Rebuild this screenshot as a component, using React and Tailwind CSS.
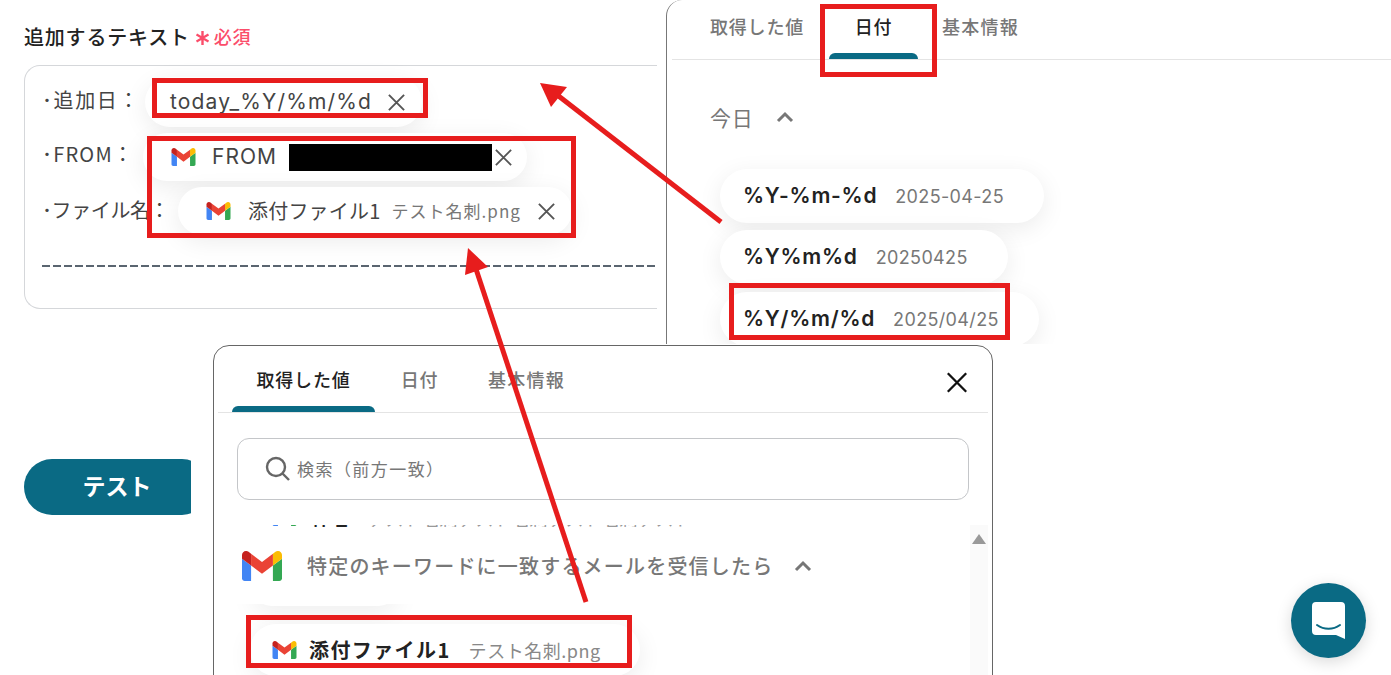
function GmailLogo({ className }) {
  return (
    <svg className={className} viewBox="52 42 88 66" aria-hidden="true">
      <path fill="#4285f4" d="M58 108h14V74L52 59v43c0 3.32 2.69 6 6 6" />
      <path fill="#34a853" d="M120 108h14c3.32 0 6-2.69 6-6V59l-20 15" />
      <path fill="#fbbc04" d="M120 48v26l20-15v-8c0-7.42-8.47-11.65-14.4-7.2" />
      <path fill="#ea4335" d="M72 74V48l24 18 24-18v26L96 92" />
      <path fill="#c5221f" d="M52 51v8l20 15V48l-5.6-4.2c-5.94-4.45-14.4-.22-14.4 7.2" />
    </svg>
  )
}

function CloseIcon({ className }) {
  return (
    <svg className={className} viewBox="0 0 20 20" fill="none" stroke="currentColor" strokeWidth="2" aria-hidden="true">
      <path d="M2 2l16 16M18 2L2 18" />
    </svg>
  )
}

function ChevronUp({ className }) {
  return (
    <svg className={className} viewBox="0 0 18 12" fill="none" stroke="currentColor" strokeWidth="3" aria-hidden="true">
      <path d="M2 10l7-7 7 7" />
    </svg>
  )
}

function DateChip({ format, value, width }) {
  return (
    <div className={`flex h-[54px] shrink-0 items-center rounded-full bg-white pl-[23px] shadow-[0_6px_24px_rgba(0,0,0,0.08)] ${width}`}>
      <span className="whitespace-nowrap font-['Inter',sans-serif] text-[21px] font-semibold tracking-[0.035em] text-[#222]">{format}</span>
      <span className="ml-[18px] whitespace-nowrap font-['Inter',sans-serif] text-[18px] tracking-[0.02em] text-[#777]">{value}</span>
    </div>
  )
}

function Tabs({ active, firstGap, className }) {
  const tabs = ['取得した値', '日付', '基本情報']
  return (
    <div className={`flex border-b border-[#e4e4e4] text-[18px] font-medium ${className}`}>
      {tabs.map((tab, i) => (
        <div
          key={tab}
          className={`relative flex items-center justify-center whitespace-nowrap ${tab === active ? 'text-[#222]' : 'text-[#777]'} ${firstGap[i]}`}
        >
          {tab}
          {tab === active && <span className="absolute bottom-0 left-0 right-0 h-[6px] rounded-t-[6px] bg-[#0a6a84]" />}
        </div>
      ))}
    </div>
  )
}

const redBoxes = [
  'left-[152px] top-[78px] h-[40px] w-[276px]',
  'left-[147px] top-[136px] h-[102px] w-[429px]',
  'left-[820px] top-[4px] h-[73px] w-[117px]',
  'left-[729px] top-[283px] h-[57px] w-[281px]',
  'left-[246px] top-[615px] h-[53px] w-[386px]',
]

export default function App() {
  return (
    <div className="relative flex h-[675px] w-[1391px] overflow-hidden bg-white font-['Noto_Sans_CJK_JP','Noto_Sans',sans-serif] tracking-[0.05em] text-[#333]">
      {/* left form */}
      <div className="w-[657px] shrink-0 pl-6">
        <div className="flex h-[65px] items-center pt-[8px]">
          <span className="text-[20px] font-medium tracking-[0.04em] text-[#222]">追加するテキスト</span>
          <svg className="ml-[6px] mt-[3px] h-[14px] w-[13px] text-[#fb4d6a]" viewBox="0 0 13 14" fill="none" stroke="currentColor" strokeWidth="2.4" aria-hidden="true">
            <path d="M6.5 0v14M0.5 3.5l12 7M12.5 3.5l-12 7" />
          </svg>
          <span className="ml-[5px] text-[18px] font-medium text-[#fb4d6a]">必須</span>
        </div>
        <div className="h-[244px] rounded-l-2xl border-y border-l border-[#d5d7da] pl-[17px] pt-[11px]">
          <div className="flex flex-col gap-[6px] text-[20px] text-[#444]">
            <div className="flex h-[50px] items-center">
              <span className="w-[103px] shrink-0 whitespace-nowrap pb-[4px] tracking-[0.08em]">･追加日：</span>
              <div className="flex h-full items-center rounded-full bg-white pl-[25px] pr-[16px] shadow-[0_6px_24px_rgba(0,0,0,0.08)]">
                <span className="whitespace-nowrap font-['Inter',sans-serif] text-[21px] tracking-[0.055em]">today_%Y/%m/%d</span>
                <CloseIcon className="ml-[15px] h-[19px] w-[19px] text-[#555]" />
              </div>
            </div>
            <div className="flex h-[48px] items-center">
              <span className="w-[101px] shrink-0 whitespace-nowrap pb-[6px] tracking-[0.06em]">･FROM：</span>
              <div className="flex h-full w-[384px] items-center rounded-full bg-white pl-[28px] shadow-[0_6px_24px_rgba(0,0,0,0.08)]">
                <GmailLogo className="h-[18px] w-[25px]" />
                <span className="ml-[16px] w-[77px] shrink-0 font-['Inter',sans-serif] text-[21px] tracking-[0.05em]">FROM</span>
                <span className="h-[27px] w-[203px] shrink-0 bg-black" />
                <CloseIcon className="ml-[2px] h-[19px] w-[19px] text-[#555]" />
              </div>
            </div>
            <div className="flex h-[48px] items-center">
              <span className="w-[136px] shrink-0 whitespace-nowrap pb-[3px] tracking-[-0.02em]">･ファイル名：</span>
              <div className="flex h-full w-[394px] items-center rounded-full bg-white pl-[28px] shadow-[0_6px_24px_rgba(0,0,0,0.08)]">
                <GmailLogo className="h-[18px] w-[25px]" />
                <span className="ml-[17px] whitespace-nowrap tracking-[0.01em]">添付ファイル1</span>
                <span className="ml-[11px] whitespace-nowrap text-[17px] tracking-[0.06em] text-[#777]">テスト名刺.png</span>
                <CloseIcon className="ml-[16px] h-[19px] w-[19px] shrink-0 text-[#555]" />
              </div>
            </div>
          </div>
          <div className="mt-[30px] h-[2px] bg-[repeating-linear-gradient(90deg,#5a6570_0_8px,transparent_8px_11px)]" />
        </div>
        <button type="button" className="mt-[150px] flex h-[56px] w-[186px] items-center justify-center rounded-full bg-[#0a6a84] pb-[3px] text-[23px] font-bold tracking-normal text-white">
          テスト
        </button>
      </div>

      {/* date picker panel, right */}
      <div className="ml-[9px] h-[344px] flex-1 overflow-hidden">
        <div className="h-[360px] rounded-tl-2xl border-l border-[#777] pl-[5px]">
          <Tabs
            active="日付"
            className="h-[60px]"
            firstGap={['ml-[39px] w-[92px] pb-[6px]', 'ml-[26px] w-[89px] pb-[6px]', 'ml-[24px] w-[77px] pb-[6px] tracking-[0.07em]']}
          />
          <div className="pl-[38px] pt-[41px]">
            <div className="flex items-center text-[21px] leading-[32px] text-[#777]">
              今日
              <ChevronUp className="ml-[22px] h-[12px] w-[18px]" />
            </div>
            <div className="ml-[10px] mt-[36px] flex flex-col gap-[7px]">
              <DateChip format="%Y-%m-%d" value="2025-04-25" width="w-[324px]" />
              <DateChip format="%Y%m%d" value="20250425" width="w-[288px]" />
              <DateChip format="%Y/%m/%d" value="2025/04/25" width="w-[319px] mt-[1px]" />
            </div>
          </div>
        </div>
      </div>

      {/* value picker window, lying over the form */}
      <div className="absolute bottom-0 left-[191px] top-[345px] isolate w-[809px] bg-white pl-[22px]">
        <div className="h-[340px] w-[780px] rounded-t-2xl border border-[#666] bg-white px-[4px]">
          <div className="relative">
            <Tabs
              active="取得した値"
              className="h-[67px]"
              firstGap={['ml-[14px] w-[143px]', 'ml-[26px] w-[37px]', 'ml-[50px] w-[77px] tracking-[0.07em]']}
            />
            <CloseIcon className="absolute right-[19px] top-[25px] h-[23px] w-[24px] text-[#111]" />
          </div>
          <div className="ml-[19px] mt-[25px] flex h-[62px] w-[732px] items-center rounded-xl border border-[#c4c6c9] pl-[27px]">
            <svg className="h-[26px] w-[26px] text-[#666]" viewBox="0 0 26 26" fill="none" stroke="currentColor" strokeWidth="2.4" aria-hidden="true">
              <circle cx="11" cy="11" r="9" />
              <path d="M17.5 17.5L24 24" />
            </svg>
            <span className="ml-[6px] text-[17px] tracking-[0.085em] text-[#777]">検索（前方一致）</span>
          </div>
          <div className="relative mt-[25px] h-[150px] overflow-hidden">
            <div className="absolute bottom-0 right-0 top-0 z-20 flex w-[18px] justify-center bg-[#fafafa] pt-[9px]">
              <span className="h-0 w-0 border-x-[7px] border-b-[10px] border-x-transparent border-b-[#999]" />
            </div>
            <div className="-mt-[17px] flex h-[19px] items-start pl-[54px]">
              <GmailLogo className="h-[18px] w-[25px]" />
              <span className="ml-[15px] text-[18px] font-bold leading-[20px] text-[#222]">件名</span>
              <span className="ml-[18px] whitespace-nowrap text-[18px] leading-[20px] tracking-normal text-[#999]">テスト名刺テスト名刺テスト名刺テスト</span>
            </div>
            <div className="relative z-10 flex h-[77px] items-center bg-white pl-[24px]">
              <GmailLogo className="h-[30px] w-[40px]" />
              <span className="ml-[25px] text-[20px] font-medium tracking-[0.06em] text-[#777]">特定のキーワードに一致するメールを受信したら</span>
              <ChevronUp className="ml-[21px] h-[12px] w-[18px] text-[#777]" />
            </div>
            <div className="-mt-[20px] ml-[32px] h-[22px] w-[150px] rounded-b-[24px] bg-white shadow-[0_6px_24px_rgba(0,0,0,0.08)]" />
            <div className="ml-[32px] mt-[18px] flex h-[52px] w-[390px] items-center rounded-full bg-white pl-[22px] shadow-[0_6px_24px_rgba(0,0,0,0.08)]">
              <GmailLogo className="h-[18px] w-[25px]" />
              <span className="ml-[12px] whitespace-nowrap text-[20px] font-bold tracking-[0.07em] text-[#222]">添付ファイル1</span>
              <span className="ml-[18px] whitespace-nowrap text-[18px] tracking-[0.03em] text-[#888]">テスト名刺.png</span>
            </div>
          </div>
        </div>
      </div>

      {/* chat launcher */}
      <div className="absolute left-[1291px] top-[583px] flex h-[75px] w-[75px] items-center justify-center rounded-full bg-[#0a6a84] shadow-[0_4px_16px_rgba(0,0,0,0.15)]">
        <svg className="h-[37px] w-[33px]" viewBox="0 0 33 37" aria-hidden="true">
          <path fill="#fff" d="M4 0h25a4 4 0 0 1 4 4v33l-9-4H4a4 4 0 0 1-4-4V4a4 4 0 0 1 4-4z" />
          <path fill="none" stroke="#0a6a84" strokeWidth="2" strokeLinecap="round" d="M5 23c7 5 16 5 23 0" />
        </svg>
      </div>

      {/* annotations */}
      {redBoxes.map((box) => (
        <div key={box} className={`pointer-events-none absolute border-[5px] border-[#e71d1d] ${box}`} />
      ))}
      <svg className="pointer-events-none absolute left-0 top-0 h-[675px] w-[1391px]" viewBox="0 0 1391 675" aria-hidden="true">
        <path d="M721 222L556 94" stroke="#e71d1d" strokeWidth="5" fill="none" />
        <polygon fill="#e71d1d" points="540,83 567,87 551,107" />
        <path d="M586 602L475 266" stroke="#e71d1d" strokeWidth="5" fill="none" />
        <polygon fill="#e71d1d" points="468,248 488,267 465,275" />
      </svg>
    </div>
  )
}
